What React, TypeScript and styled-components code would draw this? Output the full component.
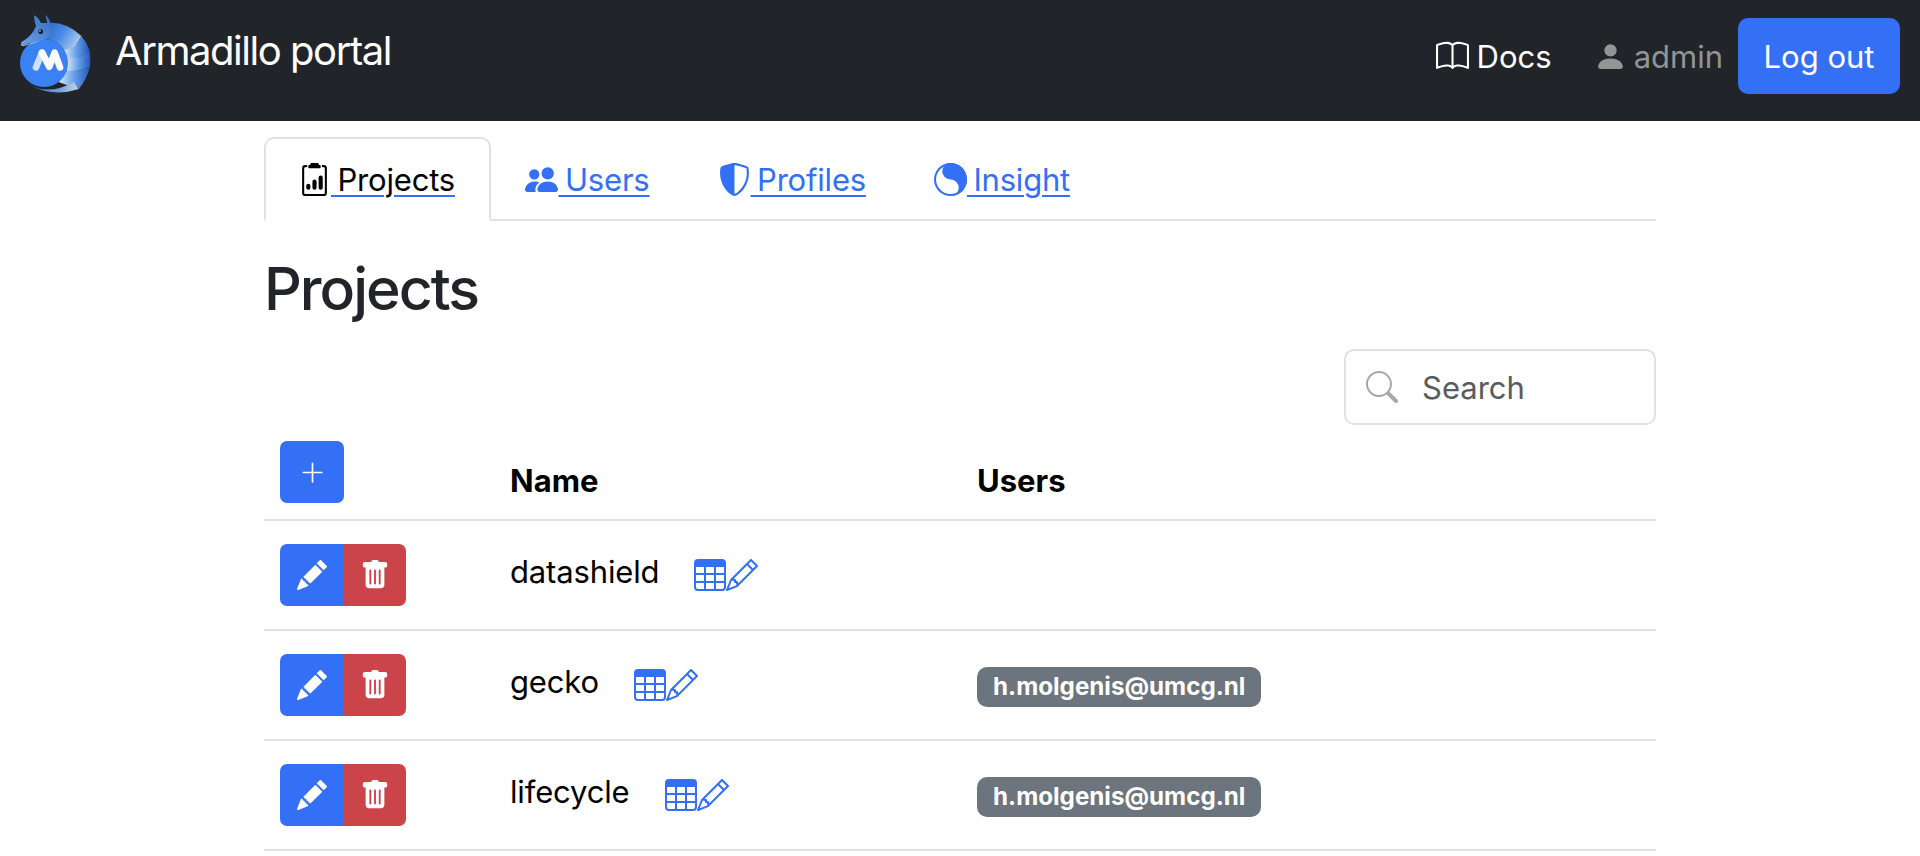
import * as React from "react";
import styled, { createGlobalStyle } from "styled-components";
import {
  BsBook,
  BsPersonFill,
  BsClipboard2Data,
  BsPeopleFill,
  BsShieldShaded,
  BsSearch,
  BsPlusLg,
  BsPencilFill,
  BsTrashFill,
  BsTable,
  BsPencil,
} from "react-icons/bs";

const blue = "#3370f6";

const Global = createGlobalStyle`
  html, body { margin: 0; padding: 0; background: #fff; overflow: hidden; }
  body { font-family: Inter, "Liberation Sans", sans-serif; font-size: 31px; color: #000; }
`;

const Navbar = styled.nav`
  height: 121px;
  background: #212529;
  display: flex;
  align-items: flex-start;
  padding: 0 20px 0 10px;
  box-sizing: border-box;
`;

const Brand = styled.div`
  display: flex;
  align-items: flex-start;
  gap: 15px;
  color: #fff;
  font-size: 40px;
  letter-spacing: -1.45px;
  padding-top: 8px;
`;

const BrandText = styled.span`
  line-height: 1;
  margin-top: 23px;
`;

const NavRight = styled.div`
  margin-left: auto;
  padding-top: 18px;
  display: flex;
  align-items: center;
`;

const NavLink = styled.span<{ $muted?: boolean }>`
  display: flex;
  align-items: center;
  gap: ${(p) => (p.$muted ? "7px" : "8px")};
  margin-left: ${(p) => (p.$muted ? "42px" : "0")};
  color: ${(p) => (p.$muted ? "#929496" : "#fff")};
`;

const LogoutButton = styled.button`
  margin-left: 15px;
  width: 162px;
  height: 76px;
  background: ${blue};
  color: #fff;
  border: 0;
  border-radius: 10px;
  font: inherit;
`;

const Container = styled.main`
  width: 1392px;
  margin: 0 auto;
`;

const Tabs = styled.ul`
  list-style: none;
  margin: 16px 0 0;
  padding: 0;
  display: flex;
  height: 84px;
  box-sizing: border-box;
  border-bottom: 2px solid #dee2e6;
`;

const Tab = styled.li<{ $active?: boolean }>`
  height: 84px;
  box-sizing: border-box;
  padding: 0 ${(p) => (p.$active ? "34.5px" : "32px")} 0 32px;
  display: flex;
  align-items: center;
  border: 2px solid ${(p) => (p.$active ? "#dee2e6" : "transparent")};
  border-bottom-color: ${(p) => (p.$active ? "#fff" : "transparent")};
  border-radius: 10px 10px 0 0;
  color: ${(p) => (p.$active ? "#000" : blue)};
  text-decoration: underline;
  text-decoration-color: ${blue};
  text-underline-offset: 4px;
  text-decoration-thickness: 2px;
  white-space: pre;
  word-spacing: -2px;
  letter-spacing: -0.2px;
`;

const Title = styled.h1`
  font-size: 59px;
  font-weight: 500;
  letter-spacing: -2px;
  line-height: 72px;
  color: #212529;
  margin: 32px 0 0;
`;

const SearchRow = styled.div`
  display: flex;
  justify-content: flex-end;
  margin-top: 24px;
`;

const SearchBox = styled.div`
  width: 312px;
  height: 76px;
  box-sizing: border-box;
  border: 2px solid #dee2e6;
  border-radius: 10px;
  display: flex;
  align-items: center;
  gap: 24px;
  padding-left: 20px;
  color: #595c5f;
  svg { color: #a8a8a8; }
`;

const Row = styled.div<{ $head?: boolean }>`
  display: grid;
  grid-template-columns: 246px 467px 1fr;
  align-items: center;
  height: ${(p) => (p.$head ? "96px" : "110px")};
  border-bottom: 2px solid #dee2e6;
  box-sizing: border-box;
`;

const HeadCell = styled.div`
  font-weight: 700;
  padding-top: 16px;
`;

const ActionCell = styled.div`
  padding-left: 16px;
  display: flex;
`;

const AddButton = styled.button`
  width: 64px;
  height: 62px;
  border: 0;
  padding: 0;
  border-radius: 7px;
  background: ${blue};
  color: #fff;
  display: flex;
  align-items: center;
  justify-content: center;
`;

const GroupButton = styled.button<{ $danger?: boolean }>`
  width: 63px;
  height: 62px;
  border: 0;
  padding: 0;
  background: ${(p) => (p.$danger ? "#cb444a" : blue)};
  color: #fff;
  display: flex;
  align-items: center;
  justify-content: center;
  border-radius: ${(p) => (p.$danger ? "0 7px 7px 0" : "7px 0 0 7px")};
`;

const NameCell = styled.div`
  display: flex;
  align-items: center;
  gap: 35px;
  margin-top: -8px;
  letter-spacing: -0.15px;
`;

const EditIcons = styled.span`
  display: flex;
  margin-top: 8px;
  color: ${blue};
`;

const UserCell = styled.div`
  padding-top: 2px;
`;

const Badge = styled.span`
  display: inline-block;
  background: #6c757d;
  color: #fff;
  font-size: 24.2px;
  font-weight: 700;
  line-height: 40px;
  padding: 0 16px;
  border-radius: 10px;
`;

function InsightIcon() {
  return (
    <svg width="33" height="33" viewBox="0 0 16 16" fill="currentColor">
      <path d="M8 0a8 8 0 1 0 0 16A8 8 0 0 0 8 0zm0 1a7 7 0 0 1 0 14A7 7 0 0 1 8 1z" />
      <path d="M8 0A8 8 0 0 1 8 16A4 4 0 0 0 8 8A4 4 0 0 1 8 0Z" />
    </svg>
  );
}

function Logo() {
  return (
    <svg width="90" height="90" viewBox="0 0 270 270">
      <defs>
        <linearGradient id="band" x1="0" y1="0" x2="1" y2="0.5">
          <stop offset="0" stopColor="#2a62c4" />
          <stop offset="0.55" stopColor="#4a8ae6" />
          <stop offset="1" stopColor="#a9c6ee" />
        </linearGradient>
        <linearGradient id="band2" x1="0" y1="0" x2="1" y2="0">
          <stop offset="0" stopColor="#dbe7f7" />
          <stop offset="0.45" stopColor="#6fa5ec" />
          <stop offset="1" stopColor="#1f58bb" />
        </linearGradient>
        <linearGradient id="tail" x1="0" y1="0" x2="1" y2="0">
          <stop offset="0" stopColor="#3f7fdc" />
          <stop offset="0.6" stopColor="#6f9fdc" />
          <stop offset="1" stopColor="#c6d2e0" />
        </linearGradient>
        <linearGradient id="head" x1="0" y1="1" x2="1" y2="0">
          <stop offset="0" stopColor="#6fa3e6" />
          <stop offset="1" stopColor="#2e68c6" />
        </linearGradient>
      </defs>
      <path d="M100 46 Q165 36 214 84 L196 116 L166 130 Q140 92 100 93 Z" fill="url(#band)" />
      <path d="M214 84 Q230 102 238 126 L206 150 L172 150 L162 126 L196 116 Z" fill="url(#band2)" />
      <path d="M238 126 Q243 152 240 176 L206 188 L170 190 L172 148 L206 150 Z" fill="url(#band2)" />
      <path d="M240 176 Q230 214 206 244 L188 238 L146 222 L170 188 L206 188 Z" fill="url(#band2)" />
      <path d="M60 232 Q120 262 192 222 L204 244 Q130 268 60 232 Z" fill="url(#tail)" />
      <circle cx="102" cy="165" r="72" fill="#3a82f4" />
      <path d="M78 178 L96 134" stroke="#cfe0fa" strokeWidth="20" strokeLinecap="round" />
      <path d="M96 134 L118 176 L134 134 L150 178" stroke="#fff" strokeWidth="20" strokeLinecap="round" strokeLinejoin="round" fill="none" />
      <path d="M72 22 Q84 26 92 44 L112 46 L106 20 Q118 30 122 48 L130 60 Q126 88 92 98 L32 112 L34 102 Q66 86 78 54 Q72 38 72 22 Z" fill="url(#head)" />
      <path d="M32 112 Q60 108 92 98 L76 104 L40 114 Z" fill="#c8d6ea" />
      <circle cx="92" cy="71" r="7" fill="#10151c" />
      <circle cx="90" cy="69" r="2.5" fill="#fff" />
    </svg>
  );
}

const rows = [
  { name: "datashield", users: [] as string[] },
  { name: "gecko", users: ["h.molgenis@umcg.nl"] },
  { name: "lifecycle", users: ["h.molgenis@umcg.nl"] },
];

export default function App() {
  return (
    <>
      <Global />
      <Navbar>
        <Brand>
          <Logo />
          <BrandText>Armadillo portal</BrandText>
        </Brand>
        <NavRight>
          <NavLink>
            <BsBook size={33} />
            Docs
          </NavLink>
          <NavLink $muted>
            <BsPersonFill size={33} />
            admin
          </NavLink>
          <LogoutButton>Log out</LogoutButton>
        </NavRight>
      </Navbar>
      <Container>
        <Tabs>
          <Tab $active>
            <BsClipboard2Data size={33} /> Projects
          </Tab>
          <Tab>
            <BsPeopleFill size={33} /> Users
          </Tab>
          <Tab>
            <BsShieldShaded size={33} /> Profiles
          </Tab>
          <Tab>
            <InsightIcon /> Insight
          </Tab>
        </Tabs>
        <Title>Projects</Title>
        <SearchRow>
          <SearchBox>
            <BsSearch size={32} />
            Search
          </SearchBox>
        </SearchRow>
        <Row $head>
          <ActionCell>
            <AddButton>
              <BsPlusLg size={27} />
            </AddButton>
          </ActionCell>
          <HeadCell>Name</HeadCell>
          <HeadCell>Users</HeadCell>
        </Row>
        {rows.map((r) => (
          <Row key={r.name}>
            <ActionCell>
              <GroupButton>
                <BsPencilFill size={30} />
              </GroupButton>
              <GroupButton $danger>
                <BsTrashFill size={30} />
              </GroupButton>
            </ActionCell>
            <NameCell>
              {r.name}
              <EditIcons>
                <BsTable size={32} />
                <BsPencil size={32} />
              </EditIcons>
            </NameCell>
            <UserCell>
              {r.users.map((u) => (
                <Badge key={u}>{u}</Badge>
              ))}
            </UserCell>
          </Row>
        ))}
      </Container>
    </>
  );
}
